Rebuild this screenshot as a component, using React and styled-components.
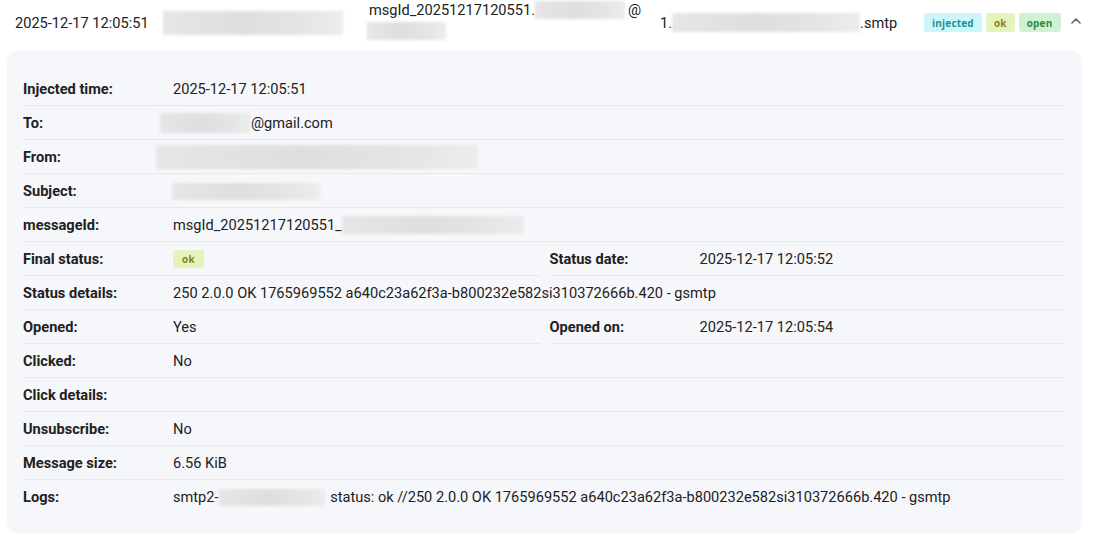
import React from 'react';
import styled, { createGlobalStyle } from 'styled-components';
import { ChevronUp } from 'lucide-react';

const Global = createGlobalStyle`
  body {
    margin: 0;
    background: #ffffff;
    font-family: Roboto, "Liberation Sans", sans-serif;
    color: #212121;
  }
`;

const Root = styled.div`
  width: 1099px;
  box-sizing: border-box;
`;

const Header = styled.div`
  display: flex;
  align-items: center;
  height: 45px;
  padding-left: 15px;
  font-size: 14.6px;
  white-space: nowrap;
`;

const Col = styled.div`
  flex-shrink: 0;
  width: ${({ w }) => w}px;
  display: flex;
  align-items: center;
`;

const Stack = styled.div`
  flex-shrink: 0;
  width: ${({ w }) => w}px;
  display: flex;
  flex-direction: column;
  line-height: 21px;
  margin-top: -4px;
`;

const Line = styled.div`
  display: flex;
  align-items: center;
  height: 21px;
`;

const Redacted = styled.span`
  display: inline-block;
  flex-shrink: 0;
  width: ${({ w }) => w}px;
  height: ${({ h }) => h || 20}px;
  margin-left: ${({ ml }) => ml || 0}px;
  margin-right: ${({ mr }) => mr || 0}px;
  background: linear-gradient(90deg, #e6e6e6, #dedede 45%, #e4e4e4 75%, #ececec);
  filter: blur(1.5px);
  vertical-align: middle;
`;

const Badges = styled.div`
  display: flex;
  align-items: center;
  gap: 4px;
`;

const Badge = styled.span`
  display: inline-flex;
  align-items: center;
  height: ${({ h }) => h || 19}px;
  padding: 0 ${({ px }) => px || 8}px;
  border-radius: 3px;
  font-family: "Open Sans", "Noto Sans", sans-serif;
  font-size: 10px;
  font-weight: 700;
  letter-spacing: 0.2px;
  background: ${({ kind }) =>
    kind === 'injected' ? '#ccf7fa' : kind === 'ok' ? '#e6f3bd' : '#cff2d5'};
  color: ${({ kind }) =>
    kind === 'injected' ? '#23909c' : kind === 'ok' ? '#86861c' : '#2f8a3d'};
`;

const Toggle = styled.span`
  display: inline-flex;
  margin-left: 3px;
  margin-top: -3px;
  color: #6b6b6b;
`;

const Panel = styled.div`
  margin: 6px 17px 0 7px;
  padding: 21px 16px 19px;
  border-radius: 10px;
  background: #f6f7fb;
  display: grid;
  grid-template-columns: 1fr 1fr;
  column-gap: 10px;
  font-size: 14.6px;
`;

const Row = styled.div`
  grid-column: ${({ half }) => (half ? 'auto' : '1 / -1')};
  display: flex;
  align-items: center;
  height: 34px;
  box-sizing: border-box;
  border-bottom: ${({ last }) => (last ? 'none' : '1px solid #e7e9ee')};
  padding-top: ${({ last }) => (last ? 0 : 1)}px;
`;

const Label = styled.div`
  width: 150px;
  flex-shrink: 0;
  font-weight: 700;
`;

const Value = styled.div`
  display: flex;
  align-items: center;
  white-space: pre;
`;

function App() {
  return (
    <Root>
      <Global />
      <Header>
        <Col w={148}>2025-12-17 12:05:51</Col>
        <Col w={206}>
          <Redacted w={180} h={24} />
        </Col>
        <Stack w={291}>
          <Line>
            msgId_20251217120551.
            <Redacted w={90} h={18} mr={3} />@
          </Line>
          <Line>
            <Redacted w={79} h={18} ml={-2} />
          </Line>
        </Stack>
        <Col w={264}>
          1.<Redacted w={188} h={19} />.smtp
        </Col>
        <Badges>
          <Badge kind="injected">injected</Badge>
          <Badge kind="ok">ok</Badge>
          <Badge kind="open">open</Badge>
          <Toggle>
            <ChevronUp size={16} strokeWidth={2.6} />
          </Toggle>
        </Badges>
      </Header>

      <Panel>
        <Row>
          <Label>Injected time:</Label>
          <Value>2025-12-17 12:05:51</Value>
        </Row>
        <Row>
          <Label>To:</Label>
          <Value>
            <Redacted w={90} h={20} ml={-13} mr={1} />@gmail.com
          </Value>
        </Row>
        <Row>
          <Label>From:</Label>
          <Value>
            <Redacted w={322} h={24} ml={-17} />
          </Value>
        </Row>
        <Row>
          <Label>Subject:</Label>
          <Value>
            <Redacted w={148} h={17} ml={-1} />
          </Value>
        </Row>
        <Row>
          <Label>messageId:</Label>
          <Value>
            msgId_20251217120551_
            <Redacted w={182} h={18} />
          </Value>
        </Row>
        <Row half>
          <Label>Final status:</Label>
          <Value>
            <Badge kind="ok" px={9} h={18}>ok</Badge>
          </Value>
        </Row>
        <Row half>
          <Label>Status date:</Label>
          <Value>2025-12-17 12:05:52</Value>
        </Row>
        <Row>
          <Label>Status details:</Label>
          <Value>250 2.0.0 OK 1765969552 a640c23a62f3a-b800232e582si310372666b.420 - gsmtp</Value>
        </Row>
        <Row half>
          <Label>Opened:</Label>
          <Value>Yes</Value>
        </Row>
        <Row half>
          <Label>Opened on:</Label>
          <Value>2025-12-17 12:05:54</Value>
        </Row>
        <Row>
          <Label>Clicked:</Label>
          <Value>No</Value>
        </Row>
        <Row>
          <Label>Click details:</Label>
          <Value />
        </Row>
        <Row>
          <Label>Unsubscribe:</Label>
          <Value>No</Value>
        </Row>
        <Row>
          <Label>Message size:</Label>
          <Value>6.56 KiB</Value>
        </Row>
        <Row last>
          <Label>Logs:</Label>
          <Value>
            smtp2-<Redacted w={106} h={17} mr={2} /> status: ok //250 2.0.0 OK 1765969552 a640c23a62f3a-b800232e582si310372666b.420 - gsmtp
          </Value>
        </Row>
      </Panel>
    </Root>
  );
}

export default App;
